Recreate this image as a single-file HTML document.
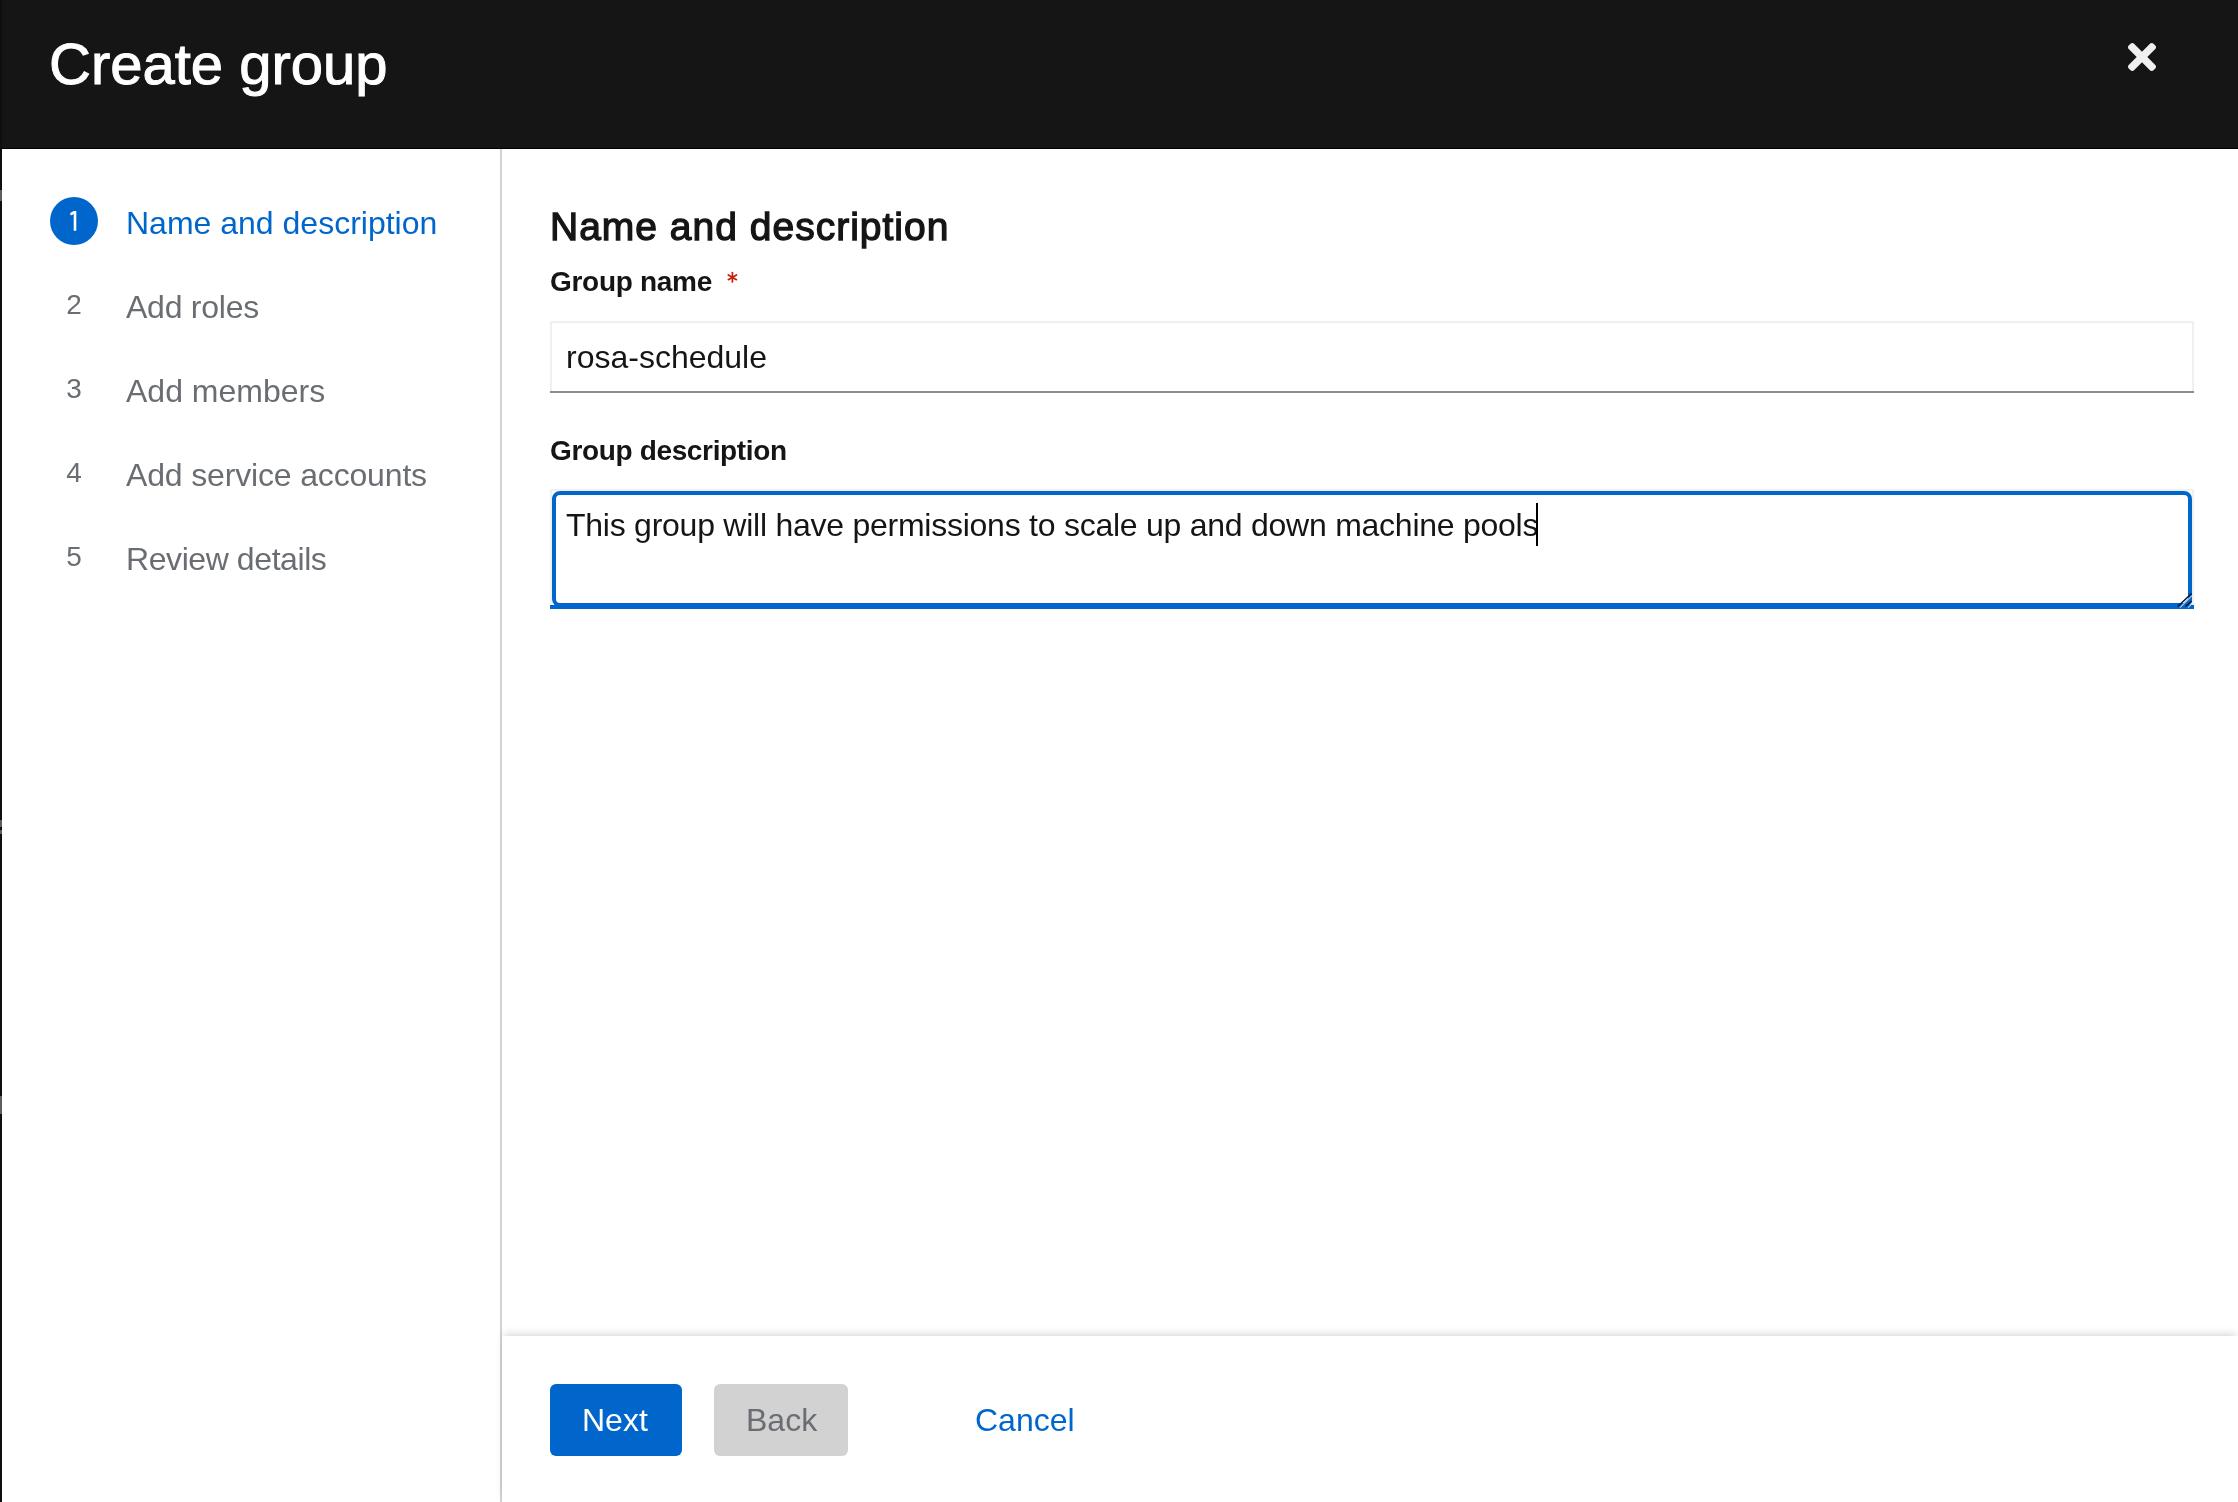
<!DOCTYPE html>
<html>
<head>
<meta charset="utf-8">
<style>
html,body{margin:0;padding:0;}
body{width:2238px;height:1502px;position:relative;overflow:hidden;background:#fff;font-family:"Liberation Sans",sans-serif;}
.a{position:absolute;white-space:nowrap;line-height:1;will-change:transform;}
#hdr{position:absolute;left:0;top:0;width:2238px;height:148px;background:#151515;}
#hline{position:absolute;left:0;top:148px;width:2238px;height:1px;background:#000;}
#lstrip{position:absolute;left:0;top:0;width:2px;height:1502px;background:#0d0f11;}
#divider{position:absolute;left:500px;top:149px;width:2px;height:1353px;background:#d2d2d2;}
.circle{position:absolute;left:50px;top:197px;width:48px;height:48px;border-radius:50%;background:#06c;}
.nav{font-size:32px;color:#6a6e73;}
.num{font-size:28px;color:#6a6e73;width:48px;text-align:center;}
#footer{position:absolute;left:502px;top:1336px;width:1736px;height:166px;background:#fff;box-shadow:0 -4px 8px -2px rgba(3,3,3,0.16);}
.btn{position:absolute;top:1384px;height:72px;border-radius:6px;}
</style>
</head>
<body>
<div id="hdr"></div>
<div id="hline"></div>
<div class="a" style="left:49px;top:35px;font-size:58px;color:#fff;-webkit-text-stroke:1px #fff;">Create group</div>
<svg style="position:absolute;left:2128px;top:43px;" width="28" height="28" viewBox="0 80 352 352"><path fill="#f0f0f0" d="M242.72 256l100.07-100.07c12.28-12.28 12.28-32.19 0-44.48l-22.24-22.24c-12.28-12.28-32.19-12.28-44.48 0L176 189.28 75.93 89.21c-12.28-12.28-32.19-12.28-44.48 0L9.21 111.45c-12.28 12.28-12.28 32.19 0 44.48L109.280 256 9.21 356.07c-12.28 12.28-12.28 32.19 0 44.48l22.24 22.24c12.28 12.28 32.2 12.28 44.48 0L176 322.72l100.07 100.07c12.28 12.28 32.2 12.28 44.48 0l22.24-22.24c12.28-12.28 12.28-32.19 0-44.48L242.72 256z"/></svg>

<div id="divider"></div>

<div class="circle"></div>
<svg style="position:absolute;left:60px;top:205px;" width="30" height="32" viewBox="60 205 30 32"><path fill="#fff" d="M70.1,213.7 Q70.2,212.9 71,212.5 L73.6,211 L76.3,211 L76.3,230.8 L73.7,230.8 L73.7,214.1 L71.6,215.3 Q70.4,215.6 70.1,213.7 Z"/></svg>
<div class="a nav" style="left:126px;top:207px;color:#06c;">Name and description</div>
<div class="a num" style="left:50px;top:291px;">2</div>
<div class="a nav" style="left:126px;top:291px;letter-spacing:-0.25px;">Add roles</div>
<div class="a num" style="left:50px;top:375px;">3</div>
<div class="a nav" style="left:126px;top:375px;">Add members</div>
<div class="a num" style="left:50px;top:459px;">4</div>
<div class="a nav" style="left:126px;top:459px;letter-spacing:-0.16px;">Add service accounts</div>
<div class="a num" style="left:50px;top:543px;">5</div>
<div class="a nav" style="left:125.5px;top:543px;letter-spacing:-0.42px;">Review details</div>

<div class="a" style="left:550px;top:207px;font-size:39px;color:#151515;letter-spacing:1px;-webkit-text-stroke:1.3px #151515;">Name and description</div>
<div class="a" style="left:550px;top:268px;font-size:28px;font-weight:bold;color:#151515;letter-spacing:-0.3px;">Group name</div>
<svg style="position:absolute;left:724px;top:269px;" width="18" height="18" viewBox="724 269 18 18"><g stroke="#c9190b" stroke-width="1.7" stroke-linecap="round"><line x1="732.4" y1="272.6" x2="732.4" y2="282"/><line x1="728.3" y1="274.95" x2="736.5" y2="279.65"/><line x1="728.3" y1="279.65" x2="736.5" y2="274.95"/></g></svg>

<div style="position:absolute;left:550px;top:321px;width:1644px;height:70px;box-sizing:border-box;border:2px solid #f0f0f0;border-bottom:0;background:#fff;"></div>
<div style="position:absolute;left:550px;top:391px;width:1644px;height:2px;background:#8a8d90;"></div>
<div class="a" style="left:566px;top:341px;font-size:32px;color:#151515;">rosa-schedule</div>

<div class="a" style="left:550px;top:437px;font-size:28px;font-weight:bold;color:#151515;letter-spacing:-0.35px;">Group description</div>

<div style="position:absolute;left:550px;top:489px;width:1644px;height:116px;box-sizing:border-box;border:2px solid #f0f0f0;border-bottom:0;background:#fff;"></div>
<div style="position:absolute;left:552px;top:491px;width:1640px;height:116px;box-sizing:border-box;border:4px solid #06c;border-radius:8px;"></div>
<div style="position:absolute;left:550px;top:605px;width:1644px;height:4px;background:#06c;"></div>
<svg style="position:absolute;left:2170px;top:585px;" width="30" height="27" viewBox="2170 585 30 27"><polygon fill="#06c" points="2180.4,607 2192,595.2 2192,602 2187,607"/><line x1="2177.7" y1="606.6" x2="2191.6" y2="593.4" stroke="#0a0f1a" stroke-width="1.4"/><line x1="2180" y1="607.6" x2="2192" y2="595.6" stroke="#a8c3ee" stroke-width="1.3"/><line x1="2185.6" y1="606.6" x2="2191.6" y2="601.2" stroke="#0a0f1a" stroke-width="1.4"/><line x1="2188" y1="607.6" x2="2192" y2="603.6" stroke="#a8c3ee" stroke-width="1.3"/></svg>
<div class="a" style="left:566px;top:509px;font-size:32px;color:#151515;letter-spacing:-0.25px;">This group will have permissions to scale up and down machine pools</div>
<div style="position:absolute;left:1536px;top:503px;width:2px;height:43px;background:#000;"></div>

<div id="footer"></div>
<div class="btn" style="left:550px;width:132px;background:#06c;"></div>
<div class="a" style="left:582px;top:1404px;font-size:32px;color:#fff;">Next</div>
<div class="btn" style="left:714px;width:134px;background:#d2d2d2;"></div>
<div class="a" style="left:746px;top:1404px;font-size:32px;color:#6a6e73;">Back</div>
<div class="a" style="left:975px;top:1404px;font-size:32px;color:#06c;">Cancel</div>

<div id="lstrip"></div>
<div style="position:absolute;left:0;top:190px;width:2px;height:11px;background:#5e5e5e;"></div>
<div style="position:absolute;left:0;top:820px;width:2px;height:7px;background:#5e5e5e;"></div>
<div style="position:absolute;left:0;top:830px;width:2px;height:4px;background:#5e5e5e;"></div>
<div style="position:absolute;left:0;top:1096px;width:2px;height:18px;background:#5e5e5e;"></div>
</body>
</html>
